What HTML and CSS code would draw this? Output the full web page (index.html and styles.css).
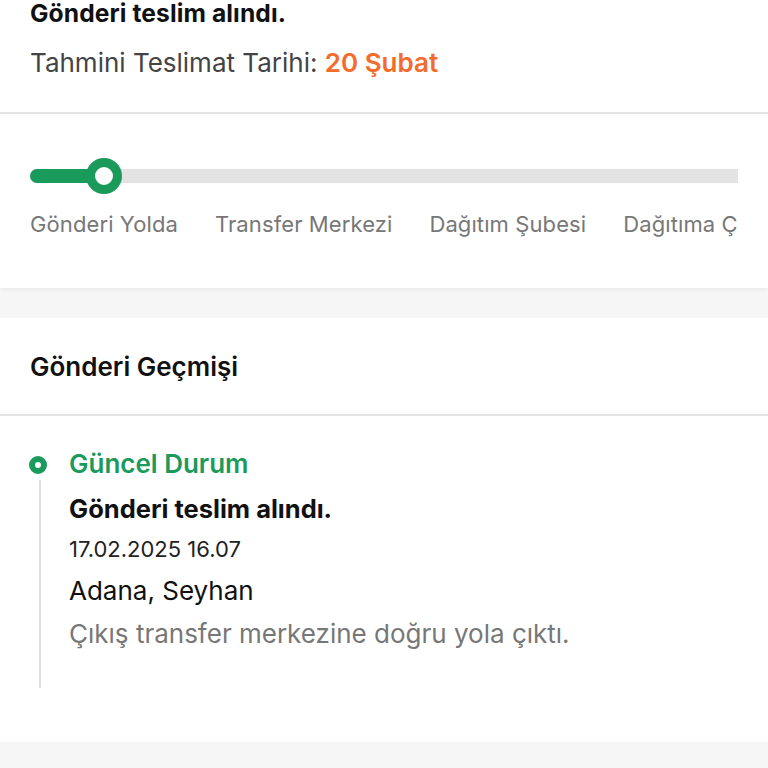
FILE: index.html
```html
<!DOCTYPE html>
<html lang="tr">
<head>
<meta charset="utf-8">
<title>Gönderi Takibi</title>
<link rel="stylesheet" href="styles.css">
</head>
<body>
<div class="page">
  <section class="card status-card">
    <div class="summary">
      <h1 class="title">Gönderi teslim alındı.</h1>
      <p class="eta">Tahmini Teslimat Tarihi: <span class="eta-date">20 Şubat</span></p>
    </div>
    <div class="progress">
      <div class="track">
        <div class="fill" style="width:74px"></div>
        <span class="knob"></span>
      </div>
      <div class="steps">
        <span class="step">Gönderi Yolda</span>
        <span class="step">Transfer Merkezi</span>
        <span class="step">Dağıtım Şubesi</span>
        <span class="step">Dağıtıma Çıktı</span>
        <span class="step">Teslim Edildi</span>
      </div>
    </div>
  </section>

  <section class="card history-card">
    <h2 class="history-title">Gönderi Geçmişi</h2>
    <div class="timeline">
      <div class="event">
        <span class="dot"></span>
        <div class="event-body">
          <div class="event-label">Güncel Durum</div>
          <div class="event-title">Gönderi teslim alındı.</div>
          <div class="event-date">17.02.2025 16.07</div>
          <div class="event-place">Adana, Seyhan</div>
          <div class="event-desc">Çıkış transfer merkezine doğru yola çıktı.</div>
        </div>
      </div>
    </div>
  </section>
</div>
</body>
</html>
```

FILE: styles.css
```css
* { box-sizing: border-box; }
html, body {
  margin: 0;
  padding: 0;
  background: #f6f6f6;
  font-family: "Inter", "Noto Sans", sans-serif;
  color: #111;
  overflow: hidden;
}
.page {
  display: flex;
  flex-direction: column;
  gap: 30px;
  margin-top: -12px;
}
.card {
  background: #fff;
  box-shadow: 0 2px 4px rgba(0,0,0,0.05);
}
.summary {
  padding: 0 30px;
  height: 126px;
  border-bottom: 2px solid #e4e4e4;
  display: flex;
  flex-direction: column;
}
.title {
  margin: 0;
  font-size: 24.6px;
  font-weight: 700;
  letter-spacing: 0.1px;
  line-height: 50px;
}
.eta {
  margin: 0;
  font-size: 26px;
  font-weight: 400;
  line-height: 50px;
  color: #444;
}
.eta-date {
  color: #f36c2c;
  font-weight: 600;
}
.progress {
  padding: 55px 30px 0;
  height: 174px;
}
.track {
  position: relative;
  height: 14px;
  background: #e3e3e3;
  border-radius: 7px 0 0 7px;
}
.fill {
  height: 14px;
  background: #1a9a5b;
  border-radius: 7px 0 0 7px;
}
.knob {
  position: absolute;
  left: 56px;
  top: -11px;
  width: 36px;
  height: 36px;
  border-radius: 50%;
  background: #fff;
  border: 9px solid #1a9a5b;
}
.steps {
  display: flex;
  gap: 37px;
  margin-top: 26px;
  white-space: nowrap;
  overflow: hidden;
}
.step {
  font-size: 22px;
  letter-spacing: 0.1px;
  line-height: 30px;
  color: #777;
  flex: none;
}
.history-title {
  margin: 0;
  padding: 0 30px;
  height: 98px;
  display: flex;
  align-items: center;
  font-size: 26px;
  font-weight: 600;
  border-bottom: 2px solid #e4e4e4;
}
.timeline {
  padding: 33px 30px 54px 29px;
}
.event {
  position: relative;
  display: flex;
}
.event::before {
  content: "";
  position: absolute;
  left: 10px;
  top: 31px;
  bottom: 0;
  width: 2px;
  background: #dedede;
}
.dot {
  flex: none;
  width: 18px;
  height: 18px;
  margin-top: 7px;
  border-radius: 50%;
  border: 6px solid #1a9a5b;
  background: #fff;
}
.event-body {
  margin-left: 22px;
  display: flex;
  flex-direction: column;
}
.event-label {
  font-size: 26px;
  font-weight: 600;
  color: #1a9a5b;
  line-height: 30px;
}
.event-title {
  font-size: 25.5px;
  font-weight: 700;
  line-height: 30px;
  margin-top: 15px;
}
.event-date {
  font-size: 22px;
  line-height: 30px;
  margin-top: 10px;
  color: #222;
}
.event-place {
  font-size: 26px;
  line-height: 30px;
  margin-top: 12px;
  color: #111;
}
.event-desc {
  font-size: 26px;
  line-height: 30px;
  margin-top: 13px;
  color: #777;
  padding-bottom: 39px;
}
```
